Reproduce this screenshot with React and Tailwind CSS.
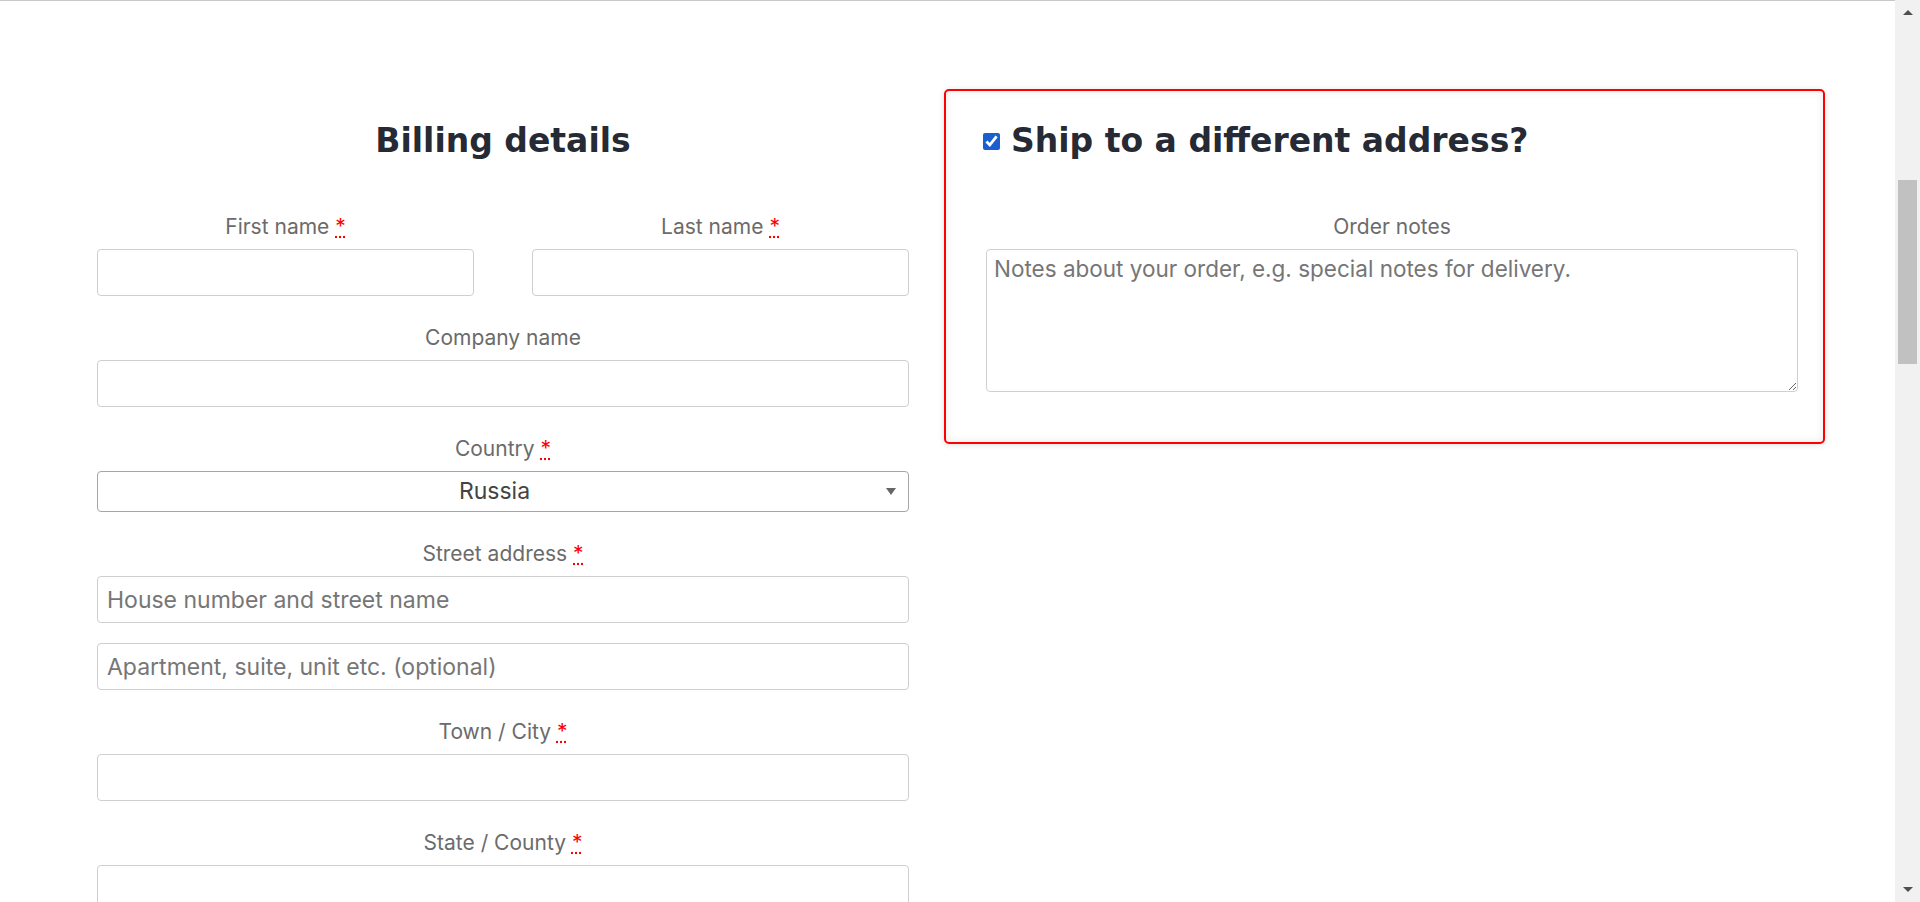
import React from "react";

const font = { fontFamily: "Inter, 'Noto Sans', sans-serif" };
const headingFont = { fontFamily: "'DejaVu Sans', 'Noto Sans', sans-serif" };

const Req = () => (
  <>
    {" "}
    <abbr title="required" className="text-[#ff0000]">
      *
    </abbr>
  </>
);

const FieldLabel = ({ children, required, className = "" }) => (
  <label
    className={`block text-center text-[21px] leading-[30px] text-[#6b6b6b] ${className}`}
  >
    {children}
    {required && <Req />}
  </label>
);

const TextInput = ({ placeholder, className = "" }) => (
  <input
    type="text"
    placeholder={placeholder}
    className={`block w-full h-[47px] rounded-[4px] border border-[#cfcfcf] bg-white px-[9px] text-[23px] text-[#333] placeholder:text-[#767676] outline-none ${className}`}
  />
);

const Scrollbar = () => (
  <div className="flex w-[25px] shrink-0 flex-col bg-[#f1f1f1]">
    <div className="flex h-[25px] items-center justify-center">
      <div className="h-0 w-0 border-x-[5px] border-b-[5px] border-x-transparent border-b-[#505050]" />
    </div>
    <div className="flex-1 px-[3px] pt-[155px]">
      <div className="h-[184px] w-full bg-[#c1c1c1]" />
    </div>
    <div className="flex h-[25px] items-center justify-center">
      <div className="h-0 w-0 border-x-[5px] border-t-[5px] border-x-transparent border-t-[#505050]" />
    </div>
  </div>
);

export default function App() {
  return (
    <div className="flex h-[902px] overflow-hidden bg-white" style={font}>
      <div className="flex-1 border-t border-[#c8c8c8]">
        <div className="flex items-start">
          {/* Billing details */}
          <div className="ml-[97px] w-[812px] pt-[116px]">
            <h3
              className="text-center text-[33px] font-bold leading-[48px] text-[#252a34]"
              style={headingFont}
            >
              Billing details
            </h3>

            <div className="mt-[47px] flex gap-[58px]">
              <div className="flex-1">
                <FieldLabel required>First name</FieldLabel>
                <TextInput className="mt-[7px]" />
              </div>
              <div className="flex-1">
                <FieldLabel required>Last name</FieldLabel>
                <TextInput className="mt-[7px]" />
              </div>
            </div>

            <FieldLabel className="mt-[27px]">Company name</FieldLabel>
            <TextInput className="mt-[7px]" />

            <FieldLabel required className="mt-[27px]">
              Country
            </FieldLabel>
            <div className="relative mt-[7px]">
              <select
                defaultValue="RU"
                className="block h-[41px] w-full appearance-none rounded-[4px] border border-[#a6a6a6] bg-white pr-[17px] text-center text-[23px] text-[#444] outline-none"
                style={{ textAlignLast: "center" }}
              >
                <option value="RU">Russia</option>
              </select>
              <div className="pointer-events-none absolute right-[13px] top-[17px] h-0 w-0 border-x-[5px] border-t-[7px] border-x-transparent border-t-[#666]" />
            </div>

            <FieldLabel required className="mt-[27px]">
              Street address
            </FieldLabel>
            <TextInput
              className="mt-[7px]"
              placeholder="House number and street name"
            />
            <TextInput
              className="mt-[20px]"
              placeholder="Apartment, suite, unit etc. (optional)"
            />

            <FieldLabel required className="mt-[27px]">
              Town / City
            </FieldLabel>
            <TextInput className="mt-[7px]" />

            <FieldLabel required className="mt-[27px]">
              State / County
            </FieldLabel>
            <TextInput className="mt-[7px]" />
          </div>

          {/* Shipping */}
          <div className="ml-[35px] mt-[88px] w-[881px] rounded-[5px] border-2 border-[#ff0000] pb-[50px] pl-[40px] pr-[25px] pt-[26px] shadow-[inset_0_0_10px_rgba(0,0,0,0.08),0_1px_6px_rgba(0,0,0,0.12)]">
            <h3
              className="flex h-[48px] items-center text-[33px] font-bold text-[#252a34]"
              style={headingFont}
            >
              <input
                type="checkbox"
                defaultChecked
                className="ml-[-3px] mr-[11px] h-[17px] w-[17px] accent-[#1a5fd0]"
              />
              Ship to a different address?
            </h3>
            <FieldLabel className="mt-[47px]">Order notes</FieldLabel>
            <textarea
              placeholder="Notes about your order, e.g. special notes for delivery."
              className="mt-[7px] block h-[143px] w-[812px] rounded-[4px] border border-[#cfcfcf] bg-white px-[7px] py-[5px] text-[22.5px] leading-[28px] text-[#333] placeholder:text-[#767676] outline-none"
            />
          </div>
        </div>
      </div>
      <Scrollbar />
    </div>
  );
}
